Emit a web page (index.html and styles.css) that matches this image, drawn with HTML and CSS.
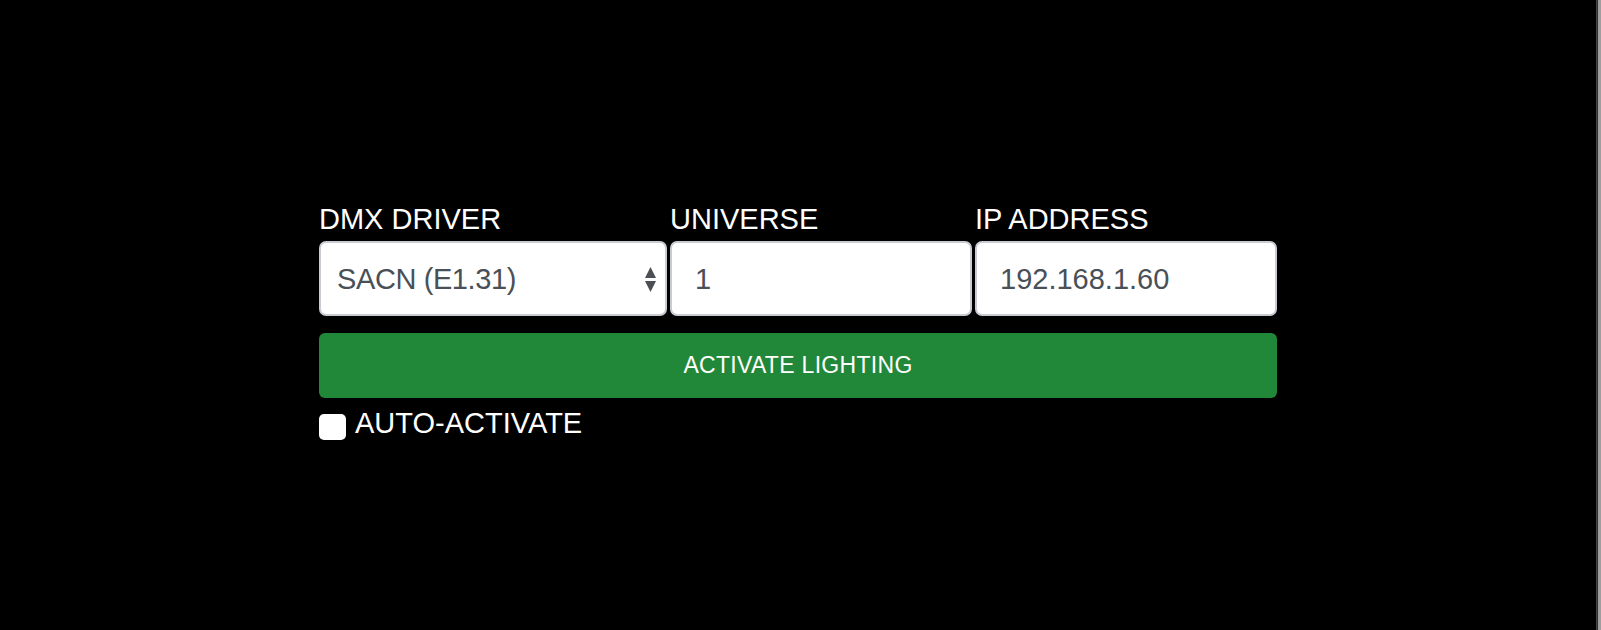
FILE: index.html
```html
<!DOCTYPE html>
<html lang="en">
<head>
<meta charset="utf-8">
<title>Lighting</title>
<link rel="stylesheet" href="styles.css">
</head>
<body>
<div class="screen">
  <main class="stage">
    <form class="panel">
      <div class="fields">
        <div class="field">
          <label class="field-label">DMX DRIVER</label>
          <div class="control control-select">
            <span class="control-value select-value">SACN (E1.31)</span>
            <svg class="select-arrows" width="11" height="25" viewBox="0 0 11 25" aria-hidden="true">
              <path d="M5.5 0 L11 11 L0 11 Z" fill="#4b4f54"/>
              <path d="M0 14 L11 14 L5.5 25 Z" fill="#4b4f54"/>
            </svg>
          </div>
        </div>
        <div class="field">
          <label class="field-label">UNIVERSE</label>
          <div class="control"><span class="control-value">1</span></div>
        </div>
        <div class="field">
          <label class="field-label">IP ADDRESS</label>
          <div class="control"><span class="control-value">192.168.1.60</span></div>
        </div>
      </div>
      <button type="button" class="activate">ACTIVATE LIGHTING</button>
      <label class="auto">
        <span class="auto-box"></span>
        <span class="auto-text">AUTO-ACTIVATE</span>
      </label>
    </form>
  </main>
  <div class="edge"></div>
</div>
</body>
</html>
```

FILE: styles.css
```css
html, body {
  margin: 0;
  padding: 0;
  background: #000;
}

body {
  font-family: "Liberation Sans", Arial, Helvetica, sans-serif;
  color: #fff;
}

.screen {
  display: flex;
  min-height: 100vh;
}

.stage {
  flex: 1;
  display: flex;
  justify-content: center;
}

.panel {
  width: 958px;
  padding-top: 202px;
  margin: 0;
}

.fields {
  display: grid;
  grid-template-columns: 348px 302px 302px;
  column-gap: 3px;
}

.field {
  display: flex;
  flex-direction: column;
}

.field-label {
  font-size: 29px;
  line-height: 34px;
  color: #fff;
  margin-bottom: 5px;
  white-space: nowrap;
}

.control {
  box-sizing: border-box;
  height: 75px;
  background: #fff;
  border: 2px solid #c8ccd2;
  border-radius: 7px;
  display: flex;
  align-items: center;
  padding: 2px 20px 0 23px;
}

.control-value {
  font-size: 29px;
  color: #495057;
  white-space: nowrap;
}

.control-select {
  padding-left: 16px;
  padding-right: 9px;
  justify-content: space-between;
}

.select-value {
  letter-spacing: -0.4px;
}

.select-arrows {
  display: block;
  margin-top: 0;
}

.activate {
  display: block;
  box-sizing: border-box;
  width: 100%;
  height: 65px;
  margin-top: 17px;
  border: none;
  border-radius: 6px;
  background: #228839;
  color: #fff;
  font-family: "Liberation Sans", Arial, Helvetica, sans-serif;
  font-size: 23px;
  letter-spacing: 0.3px;
  padding: 0;
}

.auto {
  display: flex;
  align-items: flex-start;
  margin-top: 8px;
}

.auto-box {
  width: 27px;
  height: 26px;
  margin-top: 8px;
  margin-right: 9px;
  background: #fff;
  border-radius: 5px;
  flex: none;
}

.auto-text {
  font-size: 29px;
  line-height: 34px;
  color: #fff;
}

.edge {
  width: 5px;
  flex: none;
  background: linear-gradient(to right, #474747 0, #474747 1px, #2e2e2e 1px, #2e2e2e 2px, #9e9e9e 2px, #9e9e9e 5px);
}
```
